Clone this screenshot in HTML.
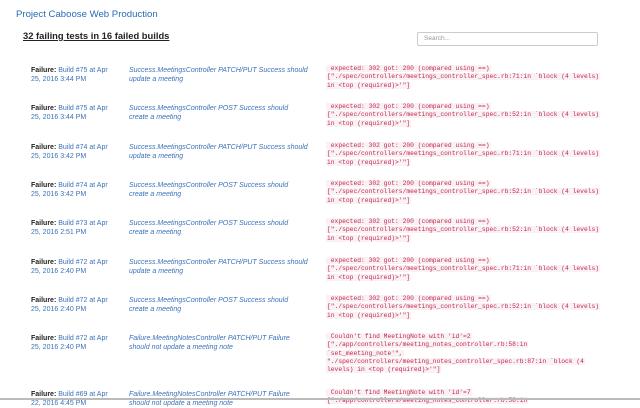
<!DOCTYPE html>
<html><head><meta charset="utf-8"><style>
html,body{margin:0;padding:0;width:640px;height:400px;overflow:hidden;background:#fff;font-family:"Liberation Sans",Arial,sans-serif;}
.t{position:absolute;left:16px;top:9px;font-size:9.6px;color:#2a6bb5;}
.h{position:absolute;left:23px;top:30px;font-size:9.4px;font-weight:bold;color:#222;text-decoration:underline;}
.s{position:absolute;left:417px;top:32px;width:179px;height:12px;border:1px solid #ccc;border-radius:2px;font-size:6.5px;color:#999;line-height:12px;padding-left:6px;box-sizing:border-box;width:181px;height:14px;}
.r{position:absolute;left:0;width:640px;}
.a{position:absolute;left:31px;top:0;font-size:7px;line-height:8.6px;color:#3a72b8;white-space:nowrap;}
.a b{color:#222;}
.b{position:absolute;left:129px;top:0;font-size:7px;line-height:8.6px;color:#3a72b8;font-style:italic;white-space:nowrap;}
.c{position:absolute;left:326px;top:-2px;font-family:"Liberation Mono",monospace;font-size:6.3px;line-height:8.3px;color:#c7254e;white-space:pre;}
.c span{background:#f9f2f4;padding:0 1px;}
.bar{position:absolute;left:0;top:398px;width:640px;height:2px;background:#bbb;}
</style></head><body>
<div class="t">Project Caboose Web Production</div>
<div class="h">32 failing tests in 16 failed builds</div>
<div class="s">Search...</div>

<div class="r" style="top:67px"><div class="a"><b>Failure:</b> Build #75 at Apr<br>25, 2016 3:44 PM</div><div class="b">Success.MeetingsController PATCH/PUT Success should<br>update a meeting</div><div class="c"><span> expected: 302 got: 200 (compared using ==)</span>
<span>["./spec/controllers/meetings_controller_spec.rb:71:in `block (4 levels)</span>
<span>in &lt;top (required)&gt;'"]</span></div></div>

<div class="r" style="top:105px"><div class="a"><b>Failure:</b> Build #75 at Apr<br>25, 2016 3:44 PM</div><div class="b">Success.MeetingsController POST Success should<br>create a meeting</div><div class="c"><span> expected: 302 got: 200 (compared using ==)</span>
<span>["./spec/controllers/meetings_controller_spec.rb:52:in `block (4 levels)</span>
<span>in &lt;top (required)&gt;'"]</span></div></div>

<div class="r" style="top:144px"><div class="a"><b>Failure:</b> Build #74 at Apr<br>25, 2016 3:42 PM</div><div class="b">Success.MeetingsController PATCH/PUT Success should<br>update a meeting</div><div class="c"><span> expected: 302 got: 200 (compared using ==)</span>
<span>["./spec/controllers/meetings_controller_spec.rb:71:in `block (4 levels)</span>
<span>in &lt;top (required)&gt;'"]</span></div></div>

<div class="r" style="top:182px"><div class="a"><b>Failure:</b> Build #74 at Apr<br>25, 2016 3:42 PM</div><div class="b">Success.MeetingsController POST Success should<br>create a meeting</div><div class="c"><span> expected: 302 got: 200 (compared using ==)</span>
<span>["./spec/controllers/meetings_controller_spec.rb:52:in `block (4 levels)</span>
<span>in &lt;top (required)&gt;'"]</span></div></div>

<div class="r" style="top:220px"><div class="a"><b>Failure:</b> Build #73 at Apr<br>25, 2016 2:51 PM</div><div class="b">Success.MeetingsController POST Success should<br>create a meeting</div><div class="c"><span> expected: 302 got: 200 (compared using ==)</span>
<span>["./spec/controllers/meetings_controller_spec.rb:52:in `block (4 levels)</span>
<span>in &lt;top (required)&gt;'"]</span></div></div>

<div class="r" style="top:259px"><div class="a"><b>Failure:</b> Build #72 at Apr<br>25, 2016 2:40 PM</div><div class="b">Success.MeetingsController PATCH/PUT Success should<br>update a meeting</div><div class="c"><span> expected: 302 got: 200 (compared using ==)</span>
<span>["./spec/controllers/meetings_controller_spec.rb:71:in `block (4 levels)</span>
<span>in &lt;top (required)&gt;'"]</span></div></div>

<div class="r" style="top:297px"><div class="a"><b>Failure:</b> Build #72 at Apr<br>25, 2016 2:40 PM</div><div class="b">Success.MeetingsController POST Success should<br>create a meeting</div><div class="c"><span> expected: 302 got: 200 (compared using ==)</span>
<span>["./spec/controllers/meetings_controller_spec.rb:52:in `block (4 levels)</span>
<span>in &lt;top (required)&gt;'"]</span></div></div>

<div class="r" style="top:335px"><div class="a"><b>Failure:</b> Build #72 at Apr<br>25, 2016 2:40 PM</div><div class="b">Failure.MeetingNotesController PATCH/PUT Failure<br>should not update a meeting note</div><div class="c"><span> Couldn't find MeetingNote with 'id'=2</span>
<span>["./app/controllers/meeting_notes_controller.rb:58:in</span>
<span>`set_meeting_note'",</span>
<span>"./spec/controllers/meeting_notes_controller_spec.rb:87:in `block (4</span>
<span>levels) in &lt;top (required)&gt;'"]</span></div></div>

<div class="r" style="top:391px"><div class="a"><b>Failure:</b> Build #69 at Apr<br>22, 2016 4:45 PM</div><div class="b">Failure.MeetingNotesController PATCH/PUT Failure<br>should not update a meeting note</div><div class="c"><span> Couldn't find MeetingNote with 'id'=7</span>
<span>["./app/controllers/meeting_notes_controller.rb:58:in</span></div></div>

<div class="bar"></div>
</body></html>
